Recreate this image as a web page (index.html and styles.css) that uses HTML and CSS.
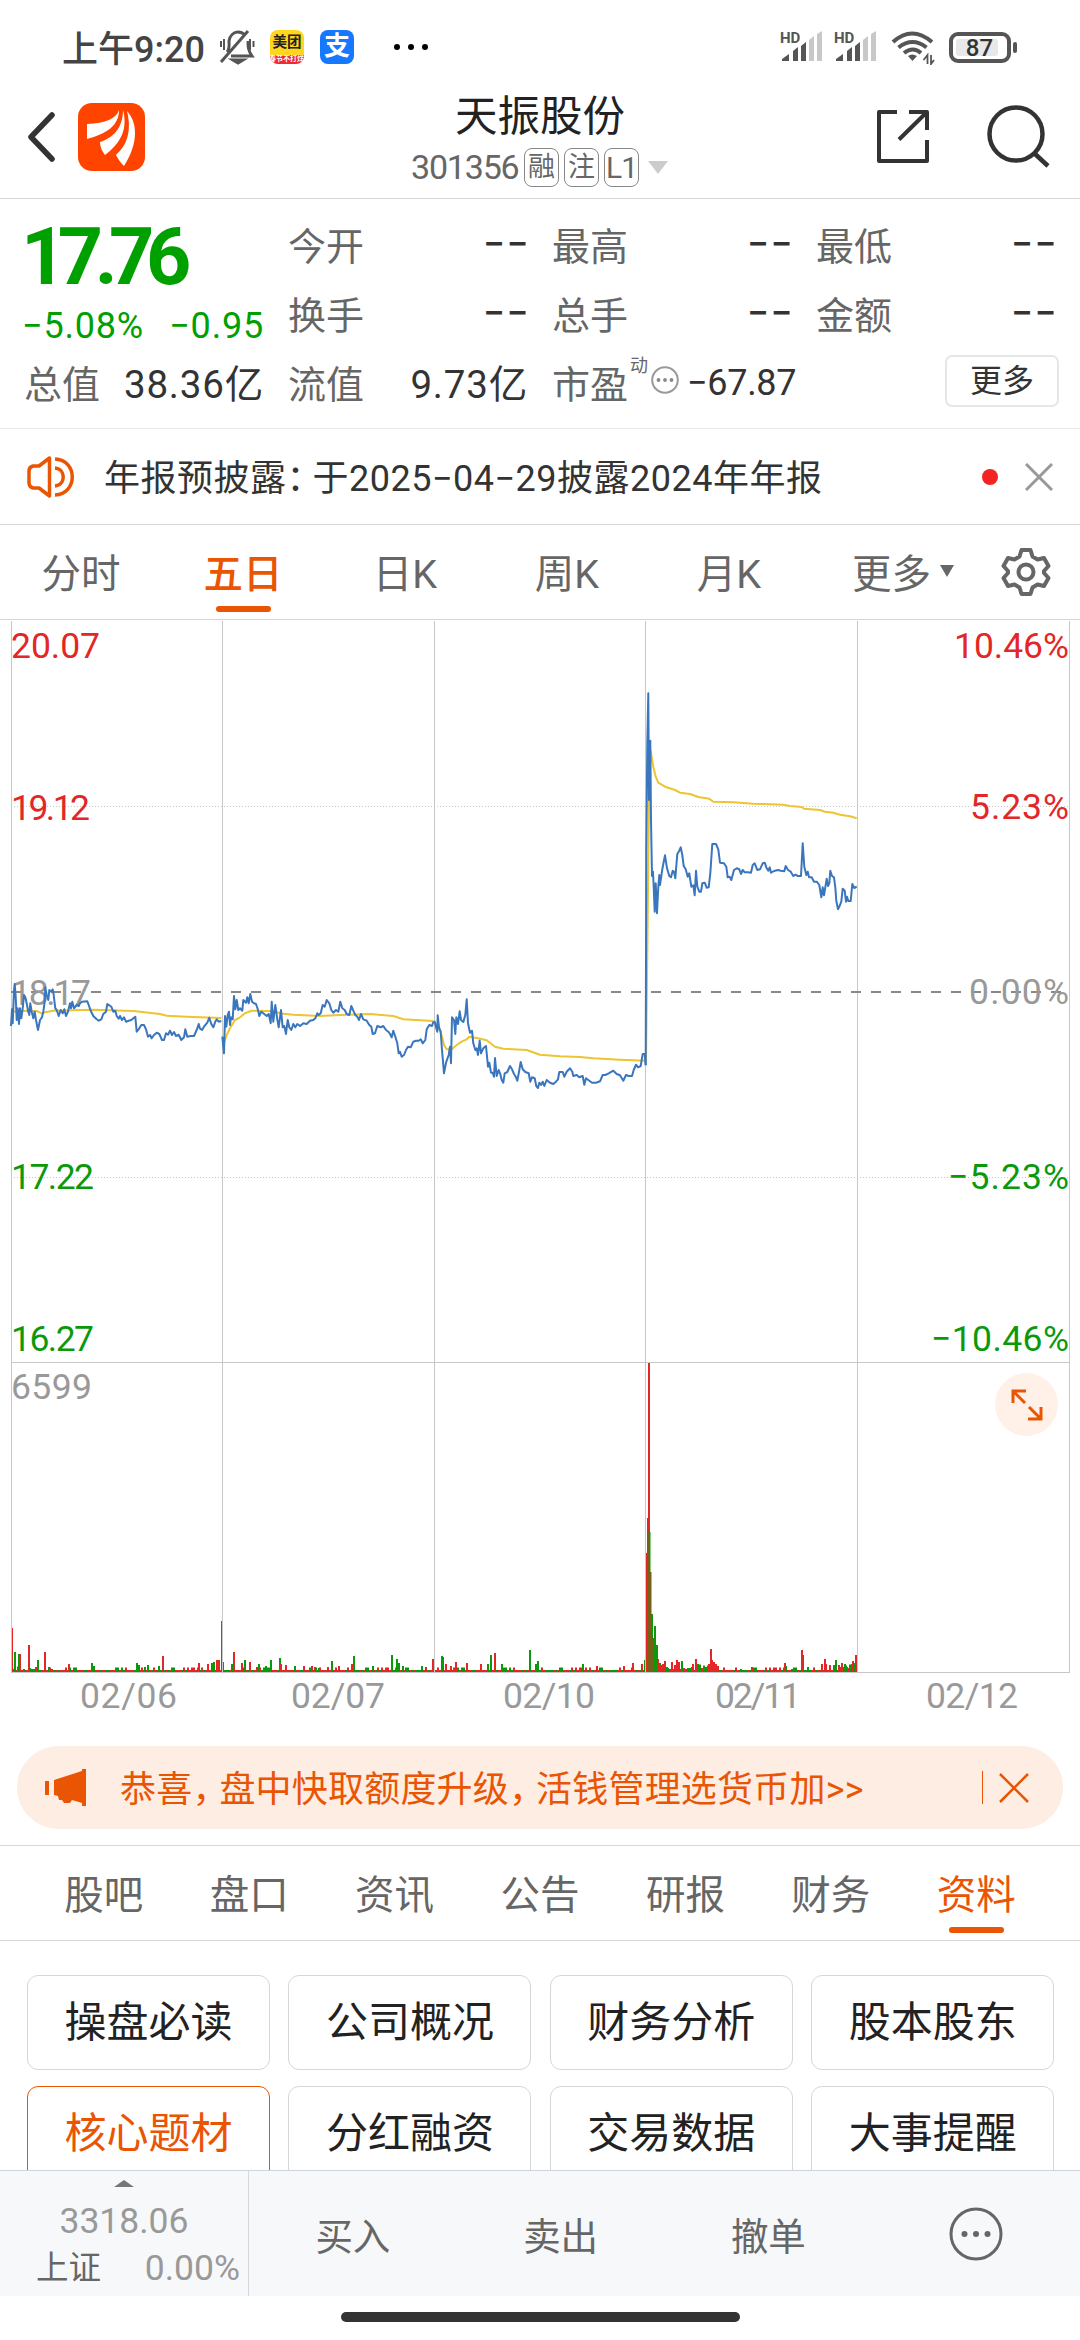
FILE: index.html
```html
<!DOCTYPE html>
<html lang="zh-CN">
<head>
    <meta charset="UTF-8">
    <meta name="viewport" content="width=device-width, initial-scale=1.0">
    <title>天振股份 301356</title>
    <link rel="stylesheet" href="styles.css">
</head>
<body>
    <div class="status-bar">
        <span class="clock">上午9:20</span>
        <svg class="bell" width="36" height="36" viewBox="0 0 36 36" fill="none" stroke="#555" stroke-width="3">
            <path d="M8 23c3-3 2-7 2-11 1-6 5-9 9-9 3 0 5 1 7 3M29 12c0 6 0 9 4 15H12M2 33L29 2M14 31h10l-5 3z"/>
            <path d="M2 12v6M5 10v11M31 10v11M34.500 12v6" stroke-width="2"/>
        </svg>
        <span class="app-icon meituan"><b>美团</b><i>春节不打烊</i></span>
        <span class="app-icon alipay">支</span>
        <span class="dots"><i></i><i></i><i></i></span>

        <div class="status-right">
            <svg width="42" height="34" viewBox="0 0 42 34">
                <text x="0" y="12.500" class="hd">HD</text>
                <path d="M2 31v-2l7-5v7zM13 31V21l5-4v14zM21 31V16l5-4v19z" fill="#555"/>
                <path d="M29 31V10l5-4v25zM37 31V4l5-3v30z" fill="#c8c8c8"/>
            </svg>
            <svg width="42" height="34" viewBox="0 0 42 34">
                <text x="0" y="12.500" class="hd">HD</text>
                <path d="M2 31v-2l7-5v7zM13 31V21l5-4v14zM21 31V16l5-4v19z" fill="#555"/>
                <path d="M29 31V10l5-4v25zM37 31V4l5-3v30z" fill="#c8c8c8"/>
            </svg>
            <svg class="wifi" width="44" height="36" viewBox="0 0 44 36" fill="none" stroke="#555" stroke-width="4">
                <path d="M2 13q19-17 39 0M7.500 18.500q14-11 28 0M13 24q9-7 17 0"/>
                <path d="M17 27q4-3 9 0l-4.500 5z" fill="#555" stroke="none"/>
                <path d="M36.500 35V26l-4 5M40 26v9l3-4" stroke-width="1.800"/>
            </svg>
            <div class="battery"><span>87</span></div>
        </div>
    </div>

    <header class="header">
        <svg class="back" width="28" height="50" viewBox="0 0 28 50" fill="none" stroke="#333" stroke-width="5.500" stroke-linecap="round" stroke-linejoin="round">
            <path d="M24 3L3 25l21 22"/>
        </svg>
        <svg class="logo" width="67" height="68" viewBox="0 0 67 68">
            <rect width="67" height="68" rx="14" fill="#ff4400"/>
            <path d="M41 7C38 16 28 20 9 21v15C28 31 41 23 41 7z" fill="#fff"/>
            <path d="M45 7C45 25 35 35 22 39c0 5 2 9 5 13C43 40 50 26 45 7z" fill="#fff"/>
            <path d="M49 8C54 28 49 42 38 52c2 4 4 7 8 11C58 45 62 22 49 8z" fill="#fff"/>
        </svg>
        <div class="title">
            <h1>天振股份</h1>
            <div class="code">
                <span class="number">301356</span>
                <span class="tag">融</span>
                <span class="tag">注</span>
                <span class="tag">L1</span>
                <span class="arrow"></span>
            </div>
        </div>
        <svg class="share" width="54" height="54" viewBox="0 0 54 54" fill="none" stroke="#333" stroke-width="4" stroke-linejoin="round">
            <path d="M21 3H3v49h48V31M33 3h18v18M51 3L23 30.500" />
        </svg>
        <svg class="search" width="64" height="64" viewBox="0 0 64 64" fill="none" stroke="#333" stroke-width="4.500">
            <circle cx="30" cy="29" r="26.500"/>
            <path d="M48 48l14 13"/>
        </svg>
    </header>

    <section class="quote">
        <div class="price">
            <strong>17.76</strong>
            <div class="change"><span>−5.08%</span><span>−0.95</span></div>
        </div>
        <div class="cell"><label>今开</label><b class="empty">−−</b></div>
        <div class="cell"><label>最高</label><b class="empty">−−</b></div>
        <div class="cell"><label>最低</label><b class="empty">−−</b></div>
        <div class="cell"><label>换手</label><b class="empty">−−</b></div>
        <div class="cell"><label>总手</label><b class="empty">−−</b></div>
        <div class="cell"><label>金额</label><b class="empty">−−</b></div>
        <div class="cell"><label>总值</label><b class="amount">38.36亿</b></div>
        <div class="cell"><label>流值</label><b class="amount">9.73亿</b></div>
        <div class="cell pe">
            <label>市盈</label><sup>动</sup>
            <svg width="28" height="28" viewBox="0 0 28 28">
                <circle cx="14" cy="14" r="12.800" fill="none" stroke="#999" stroke-width="2"/>
                <g fill="#888"><circle cx="7.500" cy="14" r="1.900"/><circle cx="14" cy="14" r="1.900"/><circle cx="20.500" cy="14" r="1.900"/></g>
            </svg>
            <b>−67.87</b>
        </div>
        <div class="cell last"><button class="more">更多</button></div>
    </section>

    <section class="notice">
        <svg width="48" height="42" viewBox="0 0 48 42" fill="none" stroke="#ea5504" stroke-width="3.500" stroke-linejoin="round">
            <path d="M22.500 2L12 10H6q-4 1-4 5v12q0 4 4 5h6l10.500 8zM28 3c23 1 23 35 0 36M28 12c11 1 11 17 0 18" />
        </svg>
        <p>年报预披露<span class="colon">：</span>于2025−04−29披露2024年年报</p>
        <span class="red-dot"></span>
        <svg width="28" height="28" viewBox="0 0 28 28" stroke="#999" stroke-width="3"><path d="M1 1l26 26M27 1L1 27"/></svg>
    </section>

    <nav class="period-tabs">
        <a>分时</a>
        <a class="active">五日</a>
        <a>日K</a>
        <a>周K</a>
        <a>月K</a>
        <a>更多<i></i></a>
        <span class="settings">
            <svg width="50" height="50" viewBox="0 0 50 50" fill="none" stroke="#666" stroke-width="4" stroke-linejoin="round">
                <path d="M20.500 3h9l2 6.500 5 3 6.500-1.500 4.500 8-4.500 5v2l4.500 5-4.500 8-6.500-1.500-5 3-2 6.500h-9l-2-6.500-5-3L7 39l-4.500-8L7 26v-2l-4.500-5L7 11l6.500 1.500 5-3z"/>
                <circle cx="25" cy="25" r="7.500"/>
            </svg>
        </span>
    </nav>

    <div class="chart">
        <svg width="1080" height="1110" viewBox="0 0 1080 1110">
            <g id="volume"></g>
            <g class="grid">
                <path d="M11.500 1v1052M222.500 1v1052M434.500 1v1052M645.500 1v1052M857.500 1v1052M1069.500 1v1052"/>
                <path d="M11 742.500h1059M11 1052.500h1059"/>
                <path class="dotted" d="M11 186.500h1059M11 557.500h1059"/>
                <path class="dashed" d="M11 372h1059"/>
            </g>
            <g class="labels">
                <text class="up" x="11" y="38" textLength="89">20.07</text>
                <text class="up" x="11" y="200" textLength="79">19.12</text>
                <text x="11" y="385" textLength="80">18.17</text>
                <text class="down" x="11" y="569" textLength="83">17.22</text>
                <text class="down" x="11" y="731" textLength="83">16.27</text>
                <text class="up" x="954" y="38" textLength="115">10.46%</text>
                <text class="up" x="970" y="199" textLength="99">5.23%</text>
                <text x="969" y="384" textLength="100">0.00%</text>
                <text class="down" x="948" y="569" textLength="121">−5.23%</text>
                <text class="down" x="931" y="731" textLength="138">−10.46%</text>
                <text x="11" y="779" textLength="81">6599</text>
                <text x="80" y="1088" textLength="97">02/06</text>
                <text x="291" y="1088" textLength="94">02/07</text>
                <text x="503" y="1088" textLength="92">02/10</text>
                <text x="715" y="1088" textLength="86">02/11</text>
                <text x="926" y="1088" textLength="92">02/12</text>
            </g>
            <g id="average"></g>
            <g id="prices"></g>
        </svg>
        <button class="expand">
            <svg width="32" height="32" viewBox="0 0 32 32" fill="none" stroke="#ea5504" stroke-width="3">
                <path d="M2 14V2h13M2 2l12 12M30 18v12H17M30 30L18 18"/>
            </svg>
        </button>
    </div>

    <div class="banner">
        <svg width="42" height="38" viewBox="0 0 42 38" fill="#ea5504">
            <path d="M0 12h4v14H0zM9 11L37 2V0h4v37h-4v-3l-10-3-2 3h-4l-2 0-2-3-3 0-1-4-4-1z"/>
        </svg>
        <p>恭喜<span class="comma">，</span>盘中快取额度升级<span class="comma">，</span>活钱管理选货币加&gt;&gt;</p>
        <i></i>
        <svg width="30" height="30" viewBox="0 0 30 30" stroke="#ea5504" stroke-width="2.500"><path d="M1 1l28 28M29 1L1 29"/></svg>
    </div>

    <nav class="info-tabs">
        <a>股吧</a>
        <a>盘口</a>
        <a>资讯</a>
        <a>公告</a>
        <a>研报</a>
        <a>财务</a>
        <a class="active">资料</a>
    </nav>

    <div class="topics">
        <a>操盘必读</a>
        <a>公司概况</a>
        <a>财务分析</a>
        <a>股本股东</a>
        <a class="active">核心题材</a>
        <a>分红融资</a>
        <a>交易数据</a>
        <a>大事提醒</a>
    </div>

    <footer class="trade-bar">
        <div class="index">
            <i class="up-arrow"></i>
            <span class="value">3318.06</span>
            <div class="row"><span>上证</span><span class="value">0.00%</span></div>
        </div>
        <a>买入</a>
        <a>卖出</a>
        <a>撤单</a>
        <a>
            <svg width="54" height="54" viewBox="0 0 54 54">
                <circle cx="27" cy="27" r="25" fill="none" stroke="#666" stroke-width="3"/>
                <g fill="#666"><circle cx="15.500" cy="27" r="3"/><circle cx="27" cy="27" r="3"/><circle cx="38.500" cy="27" r="3"/></g>
            </svg>
        </a>
    </footer>
    <div class="home-bar"><span></span></div>

    <script src="chart.js"></script>
</body>
</html>
```
FILE: styles.css
```css
* {
    box-sizing: border-box;
}
body {
    margin: 0;
    width: 1080px;
    height: 2340px;
    overflow: hidden;
    display: flex;
    flex-direction: column;
    background: #fff;
    color: #333;
    font-family: Roboto, "Noto Sans CJK SC", sans-serif;
}
h1, p {
    margin: 0;
    font-weight: 400;
}
i, b {
    font-style: normal;
    font-weight: 400;
}
svg {
    display: block;
    flex: none;
}
button {
    padding: 0;
    font-family: inherit;
}

/* status bar */
.status-bar {
    height: 94px;
    flex: none;
    display: flex;
    align-items: center;
    padding-left: 62px;
    padding-right: 69px;
}
.clock {
    width: 142px;
    margin-top: -3px;
    font-size: 36px;
    font-weight: 500;
    color: #444;
    white-space: nowrap;
}
.bell {
    margin-left: 15px;
}
.app-icon {
    width: 34px;
    height: 34px;
    border-radius: 8px;
    overflow: hidden;
    flex: none;
    text-align: center;
    white-space: nowrap;
}
.meituan {
    margin-left: 15px;
    background: linear-gradient(#ffd51e 73%, #ee2a36 73%);
}
.meituan b {
    display: block;
    height: 25px;
    line-height: 25px;
    font-size: 14.500px;
    font-weight: 700;
    color: #222;
}
.meituan i {
    display: block;
    margin-left: -1px;
    line-height: 9px;
    font-size: 7px;
    font-weight: 700;
    color: #fff;
}
.alipay {
    margin-left: 16px;
    background: #1677ff;
    color: #fff;
    font-size: 26px;
    font-weight: 700;
    line-height: 33px;
}
.dots {
    display: flex;
    gap: 8px;
    margin-left: 40px;
}
.dots i {
    width: 6px;
    height: 6px;
    border-radius: 50%;
    background: #000;
}
.status-right {
    display: flex;
    align-items: center;
    margin-left: auto;
    gap: 12px;
}
.hd {
    font-size: 15px;
    font-weight: 700;
    fill: #555;
}
.wifi {
    margin-left: 3px;
}
.battery {
    position: relative;
    width: 62px;
    height: 31px;
    margin-left: 2px;
    border: 4px solid #555;
    border-radius: 9px;
    padding: 3px;
}
.battery span {
    display: block;
    width: 42px;
    height: 17px;
    padding-left: 5px;
    line-height: 19px;
    border-radius: 3px;
    background: #e8e8e8;
    font-size: 24px;
    font-weight: 500;
    text-align: center;
}
.battery::after {
    content: "";
    position: absolute;
    right: -10px;
    top: 6px;
    width: 4px;
    height: 11px;
    border-radius: 2px;
    background: #555;
}

/* header */
.header {
    height: 105px;
    flex: none;
    display: flex;
    align-items: flex-start;
    border-bottom: 1px solid #d6d6d6;
    padding-left: 28px;
}
.back {
    margin-top: 18px;
}
.logo {
    margin: 9px 0 0 22px;
}
.title {
    width: 260px;
    margin-left: 266px;
}
.title h1 {
    margin-left: 44px;
    margin-top: 1px;
    font-size: 42.500px;
    line-height: 44px;
    color: #222;
}
.code {
    display: flex;
    align-items: center;
    height: 38px;
    margin-top: 9px;
    font-size: 34px;
    color: #666;
}
.code .number {
    width: 113px;
    letter-spacing: -1.2px;
}
.tag {
    width: 35px;
    height: 39px;
    margin-right: 5px;
    border: 1.500px solid #888;
    border-radius: 8px;
    font-size: 27px;
    line-height: 37px;
    text-align: center;
}
.tag:nth-child(4) {
    font-size: 30px;
    letter-spacing: -1px;
}
.arrow {
    margin: 1px 0 0 4px;
    border: 10px solid transparent;
    border-top: 13px solid #ccc;
    border-bottom: 0;
}
.share {
    margin: 15px 0 0 205px;
}
.search {
    margin: 11px 0 0 56px;
}

/* quote */
.quote {
    height: 230px;
    flex: none;
    display: grid;
    grid-template-columns: repeat(4, 240px);
    grid-template-rows: 69px 69px 68px;
    column-gap: 24px;
    padding: 10px 24px 0;
    border-bottom: 1px solid #e8e8e8;
}
.price {
    grid-row: span 2;
    color: #00a000;
}
.price strong {
    display: block;
    height: 96px;
    margin-left: -3px;
    line-height: 96px;
    font-size: 79px;
    font-weight: 700;
    letter-spacing: -8.500px;
}
.change {
    display: flex;
    justify-content: space-between;
    line-height: 42px;
    font-size: 36px;
    letter-spacing: 0.8px;
    margin-left: -2px;
}
.cell {
    display: flex;
    align-items: center;
    justify-content: space-between;
    white-space: nowrap;
    font-size: 38px;
}
.cell label {
    color: #666;
}
.cell .amount {
    font-size: 38.500px;
    letter-spacing: 0.8px;
}
.cell .empty {
    font-weight: 500;
    letter-spacing: 2px;
    margin-right: -2px;
}
.pe {
    justify-content: flex-start;
}
.pe sup {
    align-self: flex-start;
    margin: 6px 3px 0 2px;
    font-size: 18px;
    line-height: 26px;
    color: #666;
}
.pe b {
    margin: 3px 0 0 8px;
    font-size: 36px;
    letter-spacing: -0.3px;
}
.pe svg {
    margin-top: -3px;
}
.last {
    justify-content: flex-end;
}
.more {
    width: 114px;
    height: 52px;
    margin-right: -3px;
    border: 2px solid #e4e7e9;
    border-radius: 7px;
    background: #fff;
    font-size: 32px;
    line-height: 46px;
    color: #333;
}

/* notice */
.notice {
    height: 96px;
    flex: none;
    display: flex;
    align-items: center;
    border-bottom: 1px solid #d6d6d6;
    padding: 0 27px;
}
.notice p {
    flex: 1;
    margin: -3px 0 0 29px;
    font-size: 36px;
    letter-spacing: 0.5px;
}
.colon, .comma {
    letter-spacing: -10px;
}
.red-dot {
    width: 16px;
    height: 16px;
    margin-right: 27px;
    border-radius: 50%;
    background: #f42323;
}

/* tabs */
.period-tabs, .info-tabs {
    height: 95px;
    flex: none;
    display: flex;
    border-bottom: 1px solid #d6d6d6;
    font-size: 39.500px;
    color: #666;
}
.period-tabs a, .info-tabs a {
    position: relative;
    width: 162px;
    display: flex;
    align-items: center;
    justify-content: center;
    padding-bottom: 3px;
}
.period-tabs .active, .info-tabs .active {
    color: #ea5504;
}
.period-tabs .active {
    font-weight: 500;
}
.active::after {
    position: absolute;
    bottom: 7px;
    width: 55px;
    height: 6px;
    border-radius: 3px;
    background: #ea5504;
}
.period-tabs .active::after, .info-tabs .active::after {
    content: "";
}
.period-tabs a i {
    margin: 0 -24px 0 9px;
    border: 7px solid transparent;
    border-top: 12px solid #666;
    border-bottom: 0;
}
.settings {
    display: flex;
    flex: 1;
    align-items: center;
    justify-content: center;
}

/* chart */
.chart {
    position: relative;
    height: 1110px;
    flex: none;
}
.grid path {
    fill: none;
    stroke: #c8c8c8;
}
.grid .dotted {
    stroke-dasharray: 1 2;
}
.grid .dashed {
    stroke: #888;
    stroke-width: 2;
    stroke-dasharray: 10 10;
}
.labels {
    font-size: 35.500px;
    fill: #999;
}
.labels .up {
    fill: #e32626;
}
.labels .down {
    fill: #0b990b;
}
#average polyline, #prices polyline {
    fill: none;
    stroke: #edc431;
    stroke-width: 2;
    stroke-linejoin: round;
}
#prices polyline {
    stroke: #3a76bd;
}
.expand {
    position: absolute;
    right: 22px;
    top: 753px;
    width: 63px;
    height: 63px;
    display: flex;
    align-items: center;
    justify-content: center;
    border: 0;
    border-radius: 50%;
    background: #fff0e8;
}

/* banner */
.banner {
    height: 83px;
    flex: none;
    display: flex;
    align-items: center;
    margin: 16px 17px;
    padding: 0 34px 0 28px;
    border-radius: 42px;
    background: #fdede3;
    color: #ea5504;
}
.banner p {
    flex: 1;
    margin: -3px 0 0 33px;
    font-size: 36px;
    letter-spacing: 0.2px;
}
.banner .comma {
    letter-spacing: -9px;
}
.banner i {
    width: 1px;
    height: 33px;
    margin-right: 16px;
    background: #ea5504;
}

/* info tabs */
.info-tabs {
    height: 96px;
    border-top: 1px solid #d6d6d6;
    padding: 0 31px;
}
.info-tabs a {
    flex: 1;
}
.topics {
    flex: 1;
    min-height: 0;
    overflow: hidden;
    display: grid;
    grid-template-columns: repeat(4, 243px);
    grid-auto-rows: 95px;
    gap: 16px 18.400px;
    padding: 34px 27px 0;
}
.topics a {
    display: flex;
    align-items: center;
    justify-content: center;
    padding-bottom: 9px;
    border: 1.500px solid #d5d7da;
    border-radius: 11px;
    font-size: 42px;
    color: #222;
}
.topics .active {
    border-color: #ea5504;
    color: #ea5504;
}
.topics .active::after {
    content: none;
}

/* bottom bar */
.trade-bar {
    height: 126px;
    flex: none;
    display: flex;
    border-top: 1px solid #d0d4d8;
    background: #f7f8fa;
    font-size: 37.500px;
    color: #666;
}
.trade-bar a {
    flex: 1;
    display: flex;
    align-items: center;
    justify-content: center;
}
.index {
    width: 249px;
    border-right: 1px solid #d5d7da;
    display: flex;
    flex-direction: column;
    align-items: center;
    padding: 9px 8px 0 36px;
}
.index .value {
    margin-left: -28px;
    font-size: 35.500px;
    line-height: 40px;
    color: #999;
}
.index > .value {
    margin-top: 14px;
}
.up-arrow {
    margin-left: -28px;
    border: 10px solid transparent;
    border-bottom: 7px solid #777;
    border-top: 0;
}
.index .row {
    width: 100%;
    display: flex;
    align-items: center;
    justify-content: space-between;
    margin-top: 5px;
    line-height: 44px;
    font-size: 32.500px;
}
.home-bar {
    height: 44px;
    flex: none;
    display: flex;
    justify-content: center;
    padding-top: 16px;
}
.home-bar span {
    width: 399px;
    height: 10px;
    border-radius: 5px;
    background: #333;
}
```
FILE: chart.js
```js
const NS = 'http://www.w3.org/2000/svg';

// Every day: x and y of the origin, then the points in thirds of a pixel
const prices = [
    [0, 320, '33,258 36,208 38,250 42,150 44,132 47,170 50,240 53,205 57,252 60,205 64,235 68,205 72,165 76,172 80,190 84,212 88,225 91,190 95,215 100,235 104,215 108,240 114,270 120,240 126,232 130,215 134,185 136,142 140,165 145,180 148,150 154,155 158,148 161,165 166,205 170,210 176,228 182,210 188,220 193,208 198,228 204,215 210,190 213,205 217,185 222,205 230,195 236,198 240,190 246,185 262,184 266,195 272,212 280,228 290,238 296,242 304,238 310,222 318,215 322,192 328,196 334,200 340,215 346,212 350,228 356,236 360,228 366,240 372,232 378,245 386,242 394,240 406,230 410,275 416,268 424,255 432,255 438,268 444,290 450,285 455,295 462,285 470,278 478,282 486,300 492,300 498,280 504,284 510,272 516,285 522,276 528,288 536,284 544,300 552,292 556,268 562,290 572,288 582,288 590,270 596,252 600,266 606,270 612,260 622,248 628,233 634,252 640,262 646,245 650,238 656,245 664,243'],
    [0, 320, '667,290 672,340 675,228 679,260 683,225 687,215 690,255 693,232 698,238 702,168 706,208 710,180 715,210 720,205 727,212 730,180 738,188 742,172 746,190 751,162 756,185 762,190 768,192 774,210 778,228 784,215 790,220 800,228 806,222 812,250 815,185 820,245 826,195 832,238 836,262 843,210 848,262 853,258 858,282 863,240 868,262 874,270 880,252 886,262 892,252 900,258 910,250 920,252 930,242 940,240 946,235 952,220 956,225 962,220 968,195 974,200 980,180 988,190 994,210 1000,218 1008,210 1015,215 1021,185 1027,205 1034,210 1040,222 1048,225 1054,198 1060,212 1066,225 1072,230 1077,240 1083,222 1090,238 1100,242 1108,255 1114,260 1118,282 1125,280 1132,258 1142,262 1150,258 1158,270 1165,275 1170,282 1175,292 1180,272 1186,290 1192,310 1196,340 1200,335 1205,350 1212,345 1218,330 1224,320 1232,322 1240,305 1248,302 1256,302 1262,298 1268,310 1276,300 1280,268 1288,255 1296,258 1300,245'],
    [420, 320, '40,245 44,245 48,262 52,275 53,226 57,262 62,275 66,330 72,400 78,368 86,345 90,320 93,370 96,232 102,240 106,282 109,232 114,252 119,214 123,240 130,246 136,225 140,178 144,250 150,278 156,272 160,310 166,330 170,325 174,345 179,302 183,340 190,325 198,318 204,380 208,368 213,398 218,398 222,410 225,354 230,408 236,390 241,402 245,420 250,428 254,400 262,396 270,378 276,388 282,402 288,412 292,422 297,395 302,366 308,388 316,396 326,400 331,425 336,412 344,415 349,438 354,444 358,428 363,435 368,425 373,438 380,420 390,428 400,432 408,425 414,418 418,396 428,396 433,410 440,395 450,385 457,395 460,408 470,405 478,412 488,408 493,434 498,415 508,422 516,428 528,428 540,424 548,405 556,405 566,400 580,392 590,402 600,406 610,422 618,405 626,408 636,408 641,390 648,374 654,382 662,378 668,342 674,342 677,376'],
    [620, 0, '77,1335 79,700 82,370 85,220 87,540 91,362 93,600 96,768 99,755 101,800 104,875 107,790 111,880 115,800 118,765 120,795 127,748 135,706 141,745 148,768 153,772 158,752 162,755 166,775 172,702 178,692 182,682 187,705 191,738 197,748 203,770 208,760 214,800 220,796 224,826 228,752 232,800 238,815 243,815 247,790 254,788 260,803 266,802 271,760 277,672 288,672 295,688 300,728 312,730 319,740 323,772 329,770 334,780 342,750 350,745 358,748 363,762 368,750 374,757 384,757 393,758 398,735 404,730 412,750 420,748 428,730 434,728 440,745 445,752 449,742 453,758 462,753 474,750 482,752 493,754 497,738 504,750 512,755 520,768 526,764 534,768 543,768 548,670 553,740 559,765 563,755 567,772 575,772 582,785 590,785 598,795 604,832 608,802 612,826 620,776 624,798 628,790 631,752 636,768 642,772 646,802 649,842 654,868 660,855 664,845 668,806 674,812 678,845 681,830 685,843 692,843 697,792 703,804 710,800']
];
const average = [
    [0, 320, '40,215 60,213 110,213 125,220 135,217 160,212 280,209 400,213 480,222 500,227 560,230 664,234'],
    [0, 320, '672,310 680,285 690,265 705,240 720,232 735,220 755,212 810,213 850,221 880,224 960,228 1020,225 1110,222 1180,228 1210,238 1300,243'],
    [420, 320, '44,245 60,272 66,290 72,315 80,328 95,328 110,315 125,305 140,298 148,290 170,294 200,301 225,320 250,326 320,330 360,344 420,349 480,351 520,355 600,359 677,362'],
    [620, 0, '78,1322 82,1000 87,538 92,392 100,440 107,470 115,488 135,500 165,510 180,518 210,522 235,531 268,536 280,545 340,547 400,551 490,554 510,558 545,561 552,566 600,570 615,575 640,578 660,584 690,589 710,595']
];

// Volume peaks: colour, x, height
const peaks = 'r12,44 g15,20 g19,18 r20,18 r29,27 g38,12 r45,20 g49,5 r52,3 r69,8 g92,9 g94,6 g137,9 g139,7 g145,5 g148,7 r163,16 g159,6 r199,9 r208,8 g212,9 g214,10 r217,12 r219,12 g222,51 r223,10 g232,8 r234,20 r242,9 g245,12 r250,10 r257,5 g259,8 g266,6 g271,12 g280,14 r281,8 r286,7 g295,6 r304,6 r312,6 r315,5 g319,4 r328,5 g332,11 r339,6 r352,8 g354,16 g373,6 g392,17 g397,13 g399,9 g403,6 g422,6 r426,5 r433,13 g442,16 g443,15 r446,8 r451,6 r456,10 r467,9 r481,8 g488,8 g491,17 r495,19 g502,8 g530,22 g536,8 g538,11 g583,8 r597,6 r624,6 r633,9 r642,8 g645,12 r646,119 r648,154 r649,310 r650.5,100 g649.5,140 g652,58 r653.5,34 g655,46 r656,26 g657,27 r658,13 g660,9 r661,7 r663,8 r665,11 g667,5 r672,10 r675,7 r677,12 r679,10 g682,11 g690,4 r693,8 r696,13 g698,8 r709,8 r711,23 r712,12 r714,10 r716,8 r718,6 g741,3 r752,5 r785,9 g786,6 g792,3 r802,22 r803,17 g808,5 r814,3 r822,8 r825,13 r826,8 r830,7 g834,7 g836,12 r839,7 r842,9 g845,8 g847,5 g852,8 r853,11 g854,9 r856,17';

function drawLines(id, series) {
    const group = document.getElementById(id);
    series.forEach(([left, top, points]) => {
        const line = document.createElementNS(NS, 'polyline');
        line.setAttribute('points', points.split(' ').map(p => {
            const [x, y] = p.split(',');
            return (left + x / 3).toFixed(1) + ',' + (top + y / 3).toFixed(1);
        }).join(' '));
        group.appendChild(line);
    });
}

function drawBar(color, x, height) {
    const bar = document.createElementNS(NS, 'rect');
    bar.setAttribute('x', x - 1);
    bar.setAttribute('y', 1052 - height);
    bar.setAttribute('width', 2);
    bar.setAttribute('height', height);
    bar.setAttribute('fill', color === 'r' ? '#e32626' : '#0b990b');
    document.getElementById('volume').appendChild(bar);
}

// Quiet minutes between the peaks
for (let x = 12; x < 857; x += 2) {
    const n = (x * 7919 + x * x * 31) % 97;
    const busy = x < 40 || (x > 640 && x < 720) || x > 835;
    drawBar(n % 9 < 5 ? 'r' : 'g', x, 2 + (n % 5 === 0 ? 2.5 : 0) + (busy ? n % 4 : 0));
}
peaks.split(' ').forEach(p => {
    const [x, height] = p.slice(1).split(',').map(Number);
    drawBar(p[0], x, height);
});

drawLines('average', average);
drawLines('prices', prices);
```
